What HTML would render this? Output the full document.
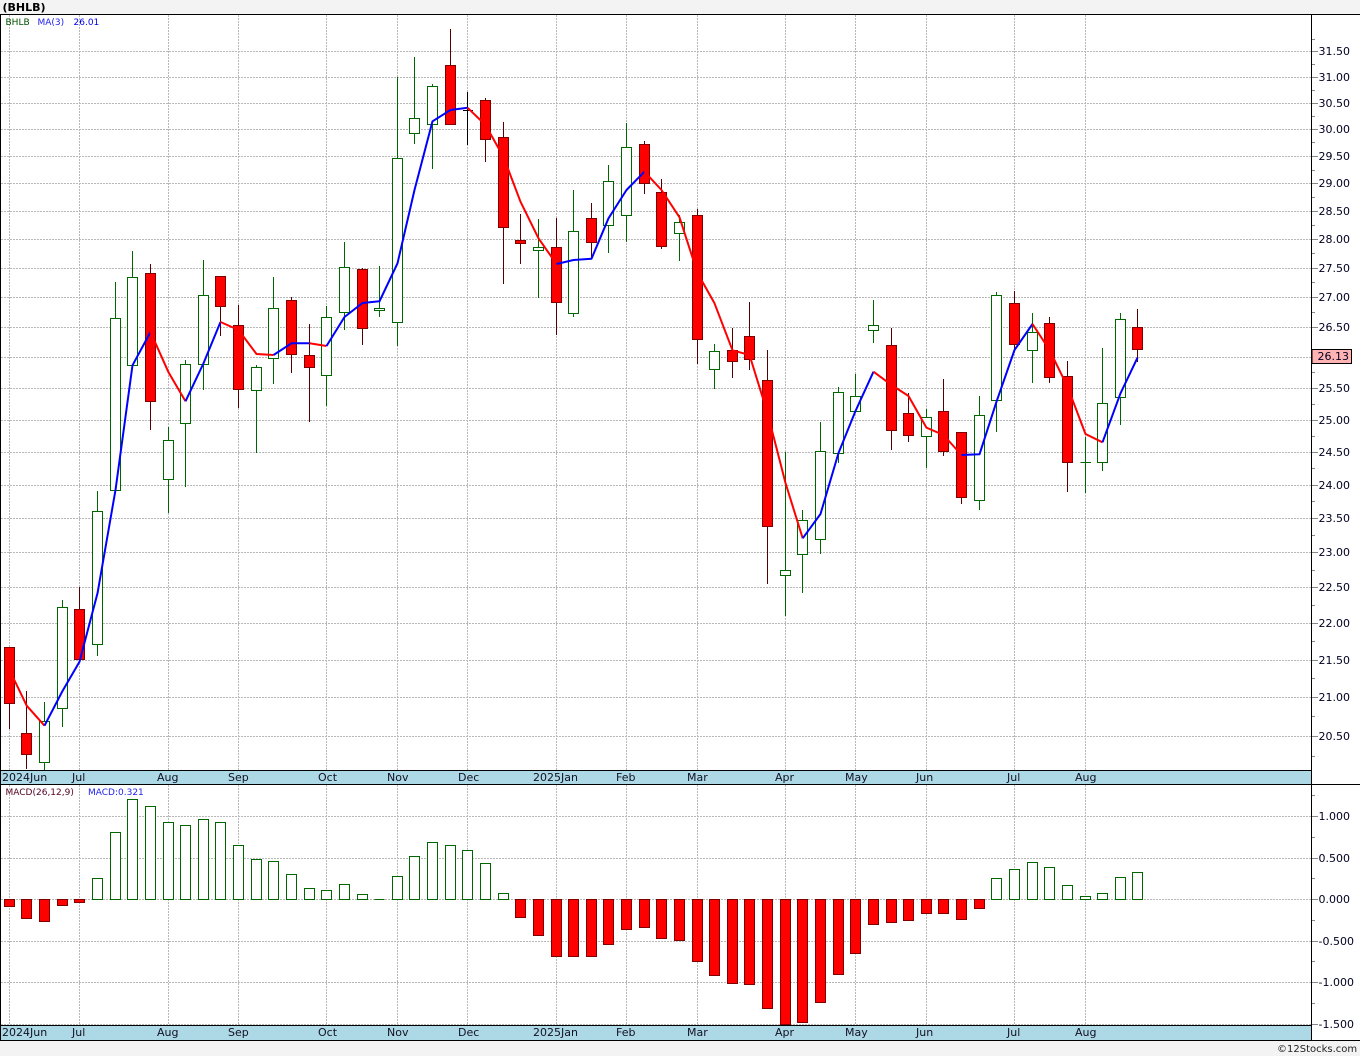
<!DOCTYPE html>
<html><head><meta charset="utf-8"><title>BHLB</title>
<style>
html,body{margin:0;padding:0;background:#fff;width:1360px;height:1056px;overflow:hidden}
svg{display:block}
text{font-family:"DejaVu Sans","Liberation Sans",sans-serif}
.d{font-size:11px;fill:#111122}
.a{font-size:11px;fill:#000022}
.s{font-size:9px}
</style></head><body>
<svg width="1360" height="1056" viewBox="0 0 1360 1056" xmlns="http://www.w3.org/2000/svg">
<rect width="1360" height="1056" fill="#fff"/>
<rect width="1360" height="14" fill="#f3f3f3"/>
<rect y="1041" width="1360" height="15" fill="#f3f3f3"/>

<g shape-rendering="crispEdges" fill="none">
<path stroke="#b8b8b8" stroke-dasharray="2 1" d="M9.5 15V770M79.5 15V770M168.5 15V770M238.5 15V770M326.5 15V770M397.5 15V770M467.5 15V770M556.5 15V770M626.5 15V770M697.5 15V770M785.5 15V770M855.5 15V770M926.5 15V770M1014.5 15V770M1085.5 15V770
M9.5 785V1025M79.5 785V1025M168.5 785V1025M238.5 785V1025M326.5 785V1025M397.5 785V1025M467.5 785V1025M556.5 785V1025M626.5 785V1025M697.5 785V1025M785.5 785V1025M855.5 785V1025M926.5 785V1025M1014.5 785V1025M1085.5 785V1025
M1 51.5H1311M1 77.5H1311M1 103.5H1311M1 129.5H1311M1 156.5H1311M1 183.5H1311M1 211.5H1311M1 239.5H1311M1 268.5H1311M1 297.5H1311M1 327.5H1311M1 357.5H1311M1 388.5H1311M1 420.5H1311M1 452.5H1311M1 485.5H1311M1 518.5H1311M1 552.5H1311M1 587.5H1311M1 623.5H1311M1 660.5H1311M1 697.5H1311M1 736.5H1311
M1 816.5H1311M1 858.5H1311M1 899.5H1311M1 941.5H1311M1 982.5H1311M1 1024.5H1311"/>

<!-- price wicks -->
<path stroke="#006600" d="M44.5 702V770M62.5 600V727M97.5 491V656M115.5 282V490M132.5 251V365M168.5 427V513M185.5 360V487M203.5 260V390M256.5 365V453M273.5 277V384M326.5 306V406M344.5 242V330M379.5 266V317M397.5 77V346M414.5 57V144M432.5 84V169M538.5 219V298M573.5 190V317M608.5 165V253M626.5 123V242M679.5 215V261M714.5 344V389M785.5 452V616M802.5 510V593M820.5 422V554M838.5 387V463M855.5 374V411M873.5 300V343M926.5 409V468M979.5 396V510M996.5 292V432M1032.5 313V383M1085.5 437V493M1102.5 348V471M1120.5 313V425M1080.5 462.5H1091"/>
<path stroke="#550000" d="M9.5 703V729M26.5 691V769M79.5 587V660M150.5 264V430M220.5 276V336M238.5 305V408M291.5 297V373M309.5 324V422M362.5 268V345M450.5 29V124M485.5 98V162M503.5 122V284M520.5 214V264M556.5 218V335M591.5 203V259M644.5 141V194M661.5 179V249M697.5 209V364M732.5 328V378M749.5 302V370M767.5 350V584M891.5 328V450M908.5 393V442M943.5 379V456M961.5 432V504M1014.5 291V350M1049.5 317V383M1067.5 361V492M1137.5 309V362"/>
<path stroke="#000" d="M467.5 92V145M463 110.5H473"/>

<!-- price bodies -->
<path stroke="#006600" fill="#fff" d="M39.5 721.5h10v41h-10zM57.5 607.5h10v101h-10zM92.5 511.5h10v133h-10zM110.5 318.5h10v172h-10zM127.5 277.5h10v88h-10zM163.5 440.5h10v39h-10zM180.5 364.5h10v59h-10zM198.5 295.5h10v69h-10zM251.5 367.5h10v23h-10zM268.5 308.5h10v50h-10zM321.5 317.5h10v58h-10zM339.5 267.5h10v45h-10zM374.5 308.5h10v2h-10zM392.5 158.5h10v164h-10zM409.5 118.5h10v15h-10zM427.5 86.5h10v38h-10zM533.5 247.5h10v3h-10zM568.5 231.5h10v82h-10zM603.5 181.5h10v44h-10zM621.5 147.5h10v68h-10zM674.5 222.5h10v11h-10zM709.5 351.5h10v18h-10zM780.5 570.5h10v5h-10zM797.5 520.5h10v34h-10zM815.5 451.5h10v88h-10zM833.5 392.5h10v61h-10zM850.5 396.5h10v15h-10zM868.5 325.5h10v5h-10zM921.5 417.5h10v19h-10zM974.5 415.5h10v85h-10zM991.5 295.5h10v105h-10zM1027.5 332.5h10v18h-10zM1097.5 403.5h10v59h-10zM1115.5 319.5h10v78h-10z"/>
<path stroke="#800000" fill="#f00" d="M4.5 647.5h10v56h-10zM21.5 733.5h10v21h-10zM74.5 609.5h10v50h-10zM145.5 273.5h10v128h-10zM215.5 276.5h10v30h-10zM233.5 325.5h10v64h-10zM286.5 300.5h10v54h-10zM304.5 355.5h10v12h-10zM357.5 269.5h10v59h-10zM445.5 65.5h10v59h-10zM480.5 100.5h10v39h-10zM498.5 137.5h10v90h-10zM515.5 240.5h10v3h-10zM551.5 247.5h10v55h-10zM586.5 218.5h10v24h-10zM639.5 144.5h10v39h-10zM656.5 192.5h10v54h-10zM692.5 215.5h10v124h-10zM727.5 350.5h10v11h-10zM744.5 336.5h10v23h-10zM762.5 380.5h10v146h-10zM886.5 345.5h10v85h-10zM903.5 413.5h10v22h-10zM938.5 411.5h10v40h-10zM956.5 432.5h10v65h-10zM1009.5 303.5h10v41h-10zM1044.5 323.5h10v54h-10zM1062.5 376.5h10v86h-10zM1132.5 327.5h10v22h-10z"/>

<!-- MACD bars -->
<path stroke="#006600" fill="#fff" d="M92.5 878.5h10v21h-10zM110.5 832.5h10v67h-10zM127.5 799.5h10v100h-10zM145.5 806.5h10v93h-10zM163.5 822.5h10v77h-10zM180.5 825.5h10v74h-10zM198.5 819.5h10v80h-10zM215.5 822.5h10v77h-10zM233.5 845.5h10v54h-10zM251.5 859.5h10v40h-10zM268.5 861.5h10v38h-10zM286.5 874.5h10v25h-10zM304.5 888.5h10v11h-10zM321.5 890.5h10v9h-10zM339.5 884.5h10v15h-10zM357.5 894.5h10v5h-10zM374.5 899.5h10M392.5 876.5h10v23h-10zM409.5 856.5h10v43h-10zM427.5 842.5h10v57h-10zM445.5 845.5h10v54h-10zM462.5 850.5h10v49h-10zM480.5 863.5h10v36h-10zM498.5 893.5h10v6h-10zM991.5 878.5h10v21h-10zM1009.5 869.5h10v30h-10zM1027.5 862.5h10v37h-10zM1044.5 867.5h10v32h-10zM1062.5 885.5h10v14h-10zM1080.5 896.5h10v3h-10zM1097.5 893.5h10v6h-10zM1115.5 877.5h10v22h-10zM1132.5 872.5h10v27h-10z"/>
<path stroke="#800000" fill="#f00" d="M4.5 899.5h10v7h-10zM21.5 899.5h10v19h-10zM39.5 899.5h10v22h-10zM57.5 899.5h10v6h-10zM74.5 899.5h10v3h-10zM515.5 899.5h10v18h-10zM533.5 899.5h10v36h-10zM551.5 899.5h10v57h-10zM568.5 899.5h10v57h-10zM586.5 899.5h10v57h-10zM603.5 899.5h10v45h-10zM621.5 899.5h10v30h-10zM639.5 899.5h10v28h-10zM656.5 899.5h10v39h-10zM674.5 899.5h10v41h-10zM692.5 899.5h10v62h-10zM709.5 899.5h10v76h-10zM727.5 899.5h10v84h-10zM744.5 899.5h10v85h-10zM762.5 899.5h10v109h-10zM780.5 899.5h10v125h-10zM797.5 899.5h10v123h-10zM815.5 899.5h10v103h-10zM833.5 899.5h10v75h-10zM850.5 899.5h10v54h-10zM868.5 899.5h10v25h-10zM886.5 899.5h10v23h-10zM903.5 899.5h10v21h-10zM921.5 899.5h10v14h-10zM938.5 899.5h10v14h-10zM956.5 899.5h10v20h-10zM974.5 899.5h10v9h-10z"/>
</g>

<!-- MA(3) -->
<g fill="none" stroke-width="2" stroke-linejoin="round">
<path stroke="#f00" d="M9.5 670L26.7 705.7L44.5 725.7"/>
<path stroke="#00f" d="M44.5 725.7L62.5 691L79.5 661.7L97.5 593.3L115.5 490L132.5 365.3L150.5 332"/>
<path stroke="#f00" d="M150.5 332L168.5 372.3L185.5 401.3"/>
<path stroke="#00f" d="M185.5 401.3L203.5 363.3L220.5 322"/>
<path stroke="#f00" d="M220.5 322L238.5 330L256.5 354L273.5 355"/>
<path stroke="#00f" d="M273.5 355L291.5 343.3L309.5 343.3"/>
<path stroke="#f00" d="M309.5 343.3L326.5 346"/>
<path stroke="#00f" d="M326.5 346L344.5 317L362.5 303L379.5 301.3L397.5 263.3L414.5 190L432.5 121.3L450.5 110L467.5 107.7"/>
<path stroke="#f00" d="M467.5 107.7L485.5 125L503.5 157L520.5 201.7L538.5 238.3L556.5 264"/>
<path stroke="#00f" d="M556.5 264L573.5 260L591.5 258.7L608.5 218.3L626.5 190L644.5 171.7"/>
<path stroke="#f00" d="M644.5 171.7L661.5 190L679.5 217.3L697.5 273L714.5 303.3L732.5 350.3L749.5 355L767.5 413L785.5 483L802.7 538.3"/>
<path stroke="#00f" d="M802.7 538.3L820.5 514L838.5 453L855.5 411L873.5 371.7"/>
<path stroke="#f00" d="M873.5 371.7L891.5 385L908.5 396L926.5 427.7L943.5 435L961.5 455"/>
<path stroke="#00f" d="M961.5 455L979.5 454.3L996.5 401.7L1014.5 350L1032.5 324"/>
<path stroke="#f00" d="M1032.5 324L1049.5 350L1067.5 386.7L1085.5 434L1102.5 442.3"/>
<path stroke="#00f" d="M1102.5 442.3L1120.5 393.3L1137.5 357.7"/>
</g>

<g shape-rendering="crispEdges">
<rect x="1" y="771" width="1310" height="13" fill="#add8e6"/>
<rect x="1" y="1026" width="1310" height="14" fill="#add8e6"/>
<path fill="none" stroke="#888" d="M1312 51.5h6M1312 77.5h6M1312 103.5h6M1312 129.5h6M1312 156.5h6M1312 183.5h6M1312 211.5h6M1312 239.5h6M1312 268.5h6M1312 297.5h6M1312 327.5h6M1312 388.5h6M1312 420.5h6M1312 452.5h6M1312 485.5h6M1312 518.5h6M1312 552.5h6M1312 587.5h6M1312 623.5h6M1312 660.5h6M1312 697.5h6M1312 736.5h6
M1312 39.5h3M1312 64.5h3M1312 90.5h3M1312 116.5h3M1312 142.5h3M1312 170.5h3M1312 197.5h3M1312 225.5h3M1312 253.5h3M1312 282.5h3M1312 312.5h3M1312 372.5h3M1312 404.5h3M1312 436.5h3M1312 468.5h3M1312 501.5h3M1312 535.5h3M1312 570.5h3M1312 605.5h3M1312 641.5h3M1312 678.5h3M1312 716.5h3M1312 756.5h3
M1312 816.5h6M1312 858.5h6M1312 899.5h6M1312 941.5h6M1312 982.5h6M1312 1024.5h6M1312 795.5h3M1312 837.5h3M1312 878.5h3M1312 920.5h3M1312 961.5h3M1312 1003.5h3"/>
<path fill="none" stroke="#000" d="M0 14.5H1360M0 770.5H1311M0 784.5H1360M0 1025.5H1311M0 1040.5H1360M1311.5 14V1041M0.5 14V1041"/>
<rect x="1312" y="349.5" width="39.5" height="14" fill="#ffb3b3" stroke="#000"/>
</g>

<text x="2.5" y="11" font-size="11" font-weight="700" fill="#000">(BHLB)</text>
<text x="5.5" y="25" class="s" fill="#005000">BHLB</text>
<text x="37.5" y="25" class="s" fill="#2222ee">MA(3)</text>
<text x="73.5" y="25" class="s" fill="#0000ee">26.01</text>
<text x="5.5" y="795" class="s" fill="#550022">MACD(26,12,9)</text>
<text x="88" y="795" class="s" fill="#2222ee">MACD:0.321</text>

<g>
<text x="2" y="781" class="d">2024Jun</text><text x="72" y="781" class="d">Jul</text><text x="157" y="781" class="d">Aug</text><text x="228" y="781" class="d">Sep</text><text x="318" y="781" class="d">Oct</text><text x="387" y="781" class="d">Nov</text><text x="458" y="781" class="d">Dec</text><text x="533" y="781" class="d">2025Jan</text><text x="616" y="781" class="d">Feb</text><text x="687" y="781" class="d">Mar</text><text x="775" y="781" class="d">Apr</text><text x="845" y="781" class="d">May</text><text x="916" y="781" class="d">Jun</text><text x="1007" y="781" class="d">Jul</text><text x="1075" y="781" class="d">Aug</text>
<text x="2" y="1036" class="d">2024Jun</text><text x="72" y="1036" class="d">Jul</text><text x="157" y="1036" class="d">Aug</text><text x="228" y="1036" class="d">Sep</text><text x="318" y="1036" class="d">Oct</text><text x="387" y="1036" class="d">Nov</text><text x="458" y="1036" class="d">Dec</text><text x="533" y="1036" class="d">2025Jan</text><text x="616" y="1036" class="d">Feb</text><text x="687" y="1036" class="d">Mar</text><text x="775" y="1036" class="d">Apr</text><text x="845" y="1036" class="d">May</text><text x="916" y="1036" class="d">Jun</text><text x="1007" y="1036" class="d">Jul</text><text x="1075" y="1036" class="d">Aug</text>
</g>

<g>
<text x="1318.5" y="55" class="a">31.50</text><text x="1318.5" y="81" class="a">31.00</text><text x="1318.5" y="107" class="a">30.50</text><text x="1318.5" y="133" class="a">30.00</text><text x="1318.5" y="160" class="a">29.50</text><text x="1318.5" y="187" class="a">29.00</text><text x="1318.5" y="215" class="a">28.50</text><text x="1318.5" y="243" class="a">28.00</text><text x="1318.5" y="272" class="a">27.50</text><text x="1318.5" y="301" class="a">27.00</text><text x="1318.5" y="331" class="a">26.50</text><text x="1318.5" y="392" class="a">25.50</text><text x="1318.5" y="424" class="a">25.00</text><text x="1318.5" y="456" class="a">24.50</text><text x="1318.5" y="489" class="a">24.00</text><text x="1318.5" y="522" class="a">23.50</text><text x="1318.5" y="556" class="a">23.00</text><text x="1318.5" y="591" class="a">22.50</text><text x="1318.5" y="627" class="a">22.00</text><text x="1318.5" y="664" class="a">21.50</text><text x="1318.5" y="701" class="a">21.00</text><text x="1318.5" y="740" class="a">20.50</text>
<text x="1317.5" y="360" class="a">26.13</text>
<text x="1318.5" y="820" class="a">1.000</text><text x="1318.5" y="862" class="a">0.500</text><text x="1318.5" y="903" class="a">0.000</text><text x="1318.5" y="945" class="a">-0.500</text><text x="1318.5" y="986" class="a">-1.000</text><text x="1318.5" y="1028" class="a">-1.500</text>
</g>
<text x="1277" y="1052" font-size="10" fill="#222">©12Stocks.com</text>
</svg>
</body></html>
